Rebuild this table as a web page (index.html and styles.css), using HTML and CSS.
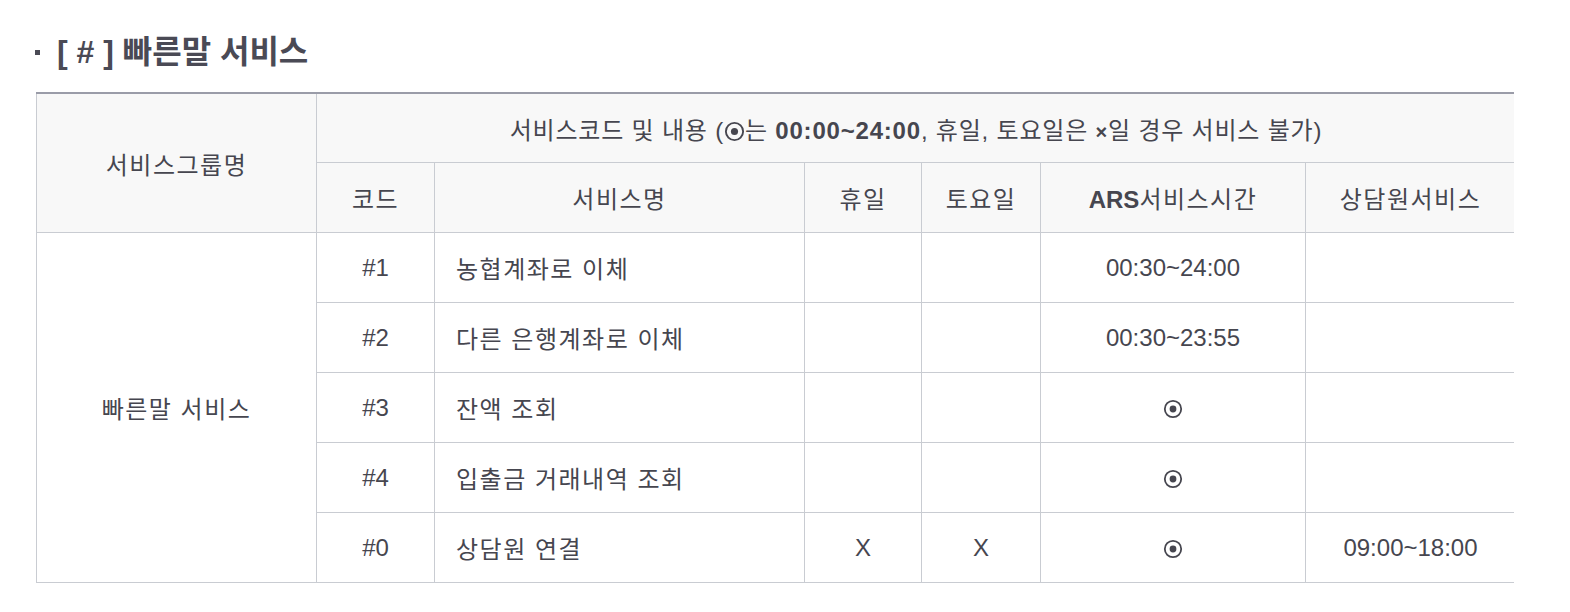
FILE: index.html
```html
<!DOCTYPE html>
<html lang="ko">
<head>
<meta charset="utf-8">
<link rel="stylesheet" href="styles.css">
</head>
<body>
<div class="page">
  <h2 class="title"><span class="bullet"></span>[ # ] 빠른말 서비스</h2>
  <div class="table-wrap">
    <table class="svc">
      <colgroup>
        <col class="c-group"><col class="c-code"><col class="c-name"><col class="c-hol"><col class="c-sat"><col class="c-ars"><col class="c-agent">
      </colgroup>
      <thead>
        <tr class="h1">
          <th rowspan="2" class="ko">서비스그룹명</th>
          <th colspan="6" class="mix">서비스코드 및 내용 (<svg class="dot inline" viewBox="0 0 20 20"><circle cx="10" cy="10" r="8.2" fill="none" stroke="currentColor" stroke-width="1.8"/><circle cx="10" cy="10" r="3.4" fill="currentColor"/></svg>는 <b>00:00~24:00</b>, 휴일, 토요일은 <b class="x">×</b>일 경우 서비스 불가)</th>
        </tr>
        <tr class="h2">
          <th class="ko">코드</th>
          <th class="ko">서비스명</th>
          <th class="ko">휴일</th>
          <th class="ko">토요일</th>
          <th class="ko"><b class="lat">ARS</b>서비스시간</th>
          <th class="ko">상담원서비스</th>
        </tr>
      </thead>
      <tbody>
        <tr>
          <td rowspan="5" class="ko">빠른말 서비스</td>
          <td>#1</td><td class="left ko">농협계좌로 이체</td><td></td><td></td><td>00:30~24:00</td><td></td>
        </tr>
        <tr>
          <td>#2</td><td class="left ko">다른 은행계좌로 이체</td><td></td><td></td><td>00:30~23:55</td><td></td>
        </tr>
        <tr>
          <td>#3</td><td class="left ko">잔액 조회</td><td></td><td></td><td><svg class="dot" viewBox="0 0 20 20"><circle cx="10" cy="10" r="8.2" fill="none" stroke="currentColor" stroke-width="1.8"/><circle cx="10" cy="10" r="3.4" fill="currentColor"/></svg></td><td></td>
        </tr>
        <tr>
          <td>#4</td><td class="left ko">입출금 거래내역 조회</td><td></td><td></td><td><svg class="dot" viewBox="0 0 20 20"><circle cx="10" cy="10" r="8.2" fill="none" stroke="currentColor" stroke-width="1.8"/><circle cx="10" cy="10" r="3.4" fill="currentColor"/></svg></td><td></td>
        </tr>
        <tr>
          <td>#0</td><td class="left ko">상담원 연결</td><td>X</td><td>X</td><td><svg class="dot" viewBox="0 0 20 20"><circle cx="10" cy="10" r="8.2" fill="none" stroke="currentColor" stroke-width="1.8"/><circle cx="10" cy="10" r="3.4" fill="currentColor"/></svg></td><td>09:00~18:00</td>
        </tr>
      </tbody>
    </table>
  </div>
</div>
</body>
</html>
```

FILE: styles.css
```css
html, body {
  margin: 0;
  padding: 0;
  background: #fff;
}
.page {
  padding: 32px 0 0 35px;
  font-family: "Liberation Sans", "Noto Sans CJK KR", sans-serif;
  color: #46464f;
}
.title {
  margin: 0 0 20px 0;
  font-size: 32px;
  line-height: 40px;
  font-weight: 700;
  color: #4a4a55;
  display: flex;
  align-items: center;
}
.bullet {
  width: 5px;
  height: 5px;
  background: #4a4a55;
  margin-right: 17px;
  margin-top: 0;
}
.table-wrap {
  margin-left: 1px;
  width: 1478px;
  overflow: hidden;
}
.svc {
  border-collapse: collapse;
  table-layout: fixed;
  width: 1479px;
  border-top: 2px solid #9a9ca8;
  font-size: 24px;
}
.c-group { width: 280px; }
.c-code { width: 118px; }
.c-name { width: 370px; }
.c-hol { width: 117px; }
.c-sat { width: 119px; }
.c-ars { width: 265px; }
.c-agent { width: 210px; }
.svc th, .svc td {
  border: 1px solid #c9ccd2;
  text-align: center;
  vertical-align: middle;
  padding: 0;
  font-weight: 400;
}
.svc th {
  background: #f8f8f8;
}
.svc .ko { letter-spacing: 1.5px; }
.svc .lat { letter-spacing: 0; }
.svc .mix { letter-spacing: 0.8px; }
.svc tr.h1 th { height: 68px; }
.svc tr.h2 th { height: 69px; }
.svc td { height: 69px; }
.svc td.left {
  text-align: left;
  padding-left: 21px;
}
.svc b { font-weight: 700; }
.svc .x { font-size: 20px; }
.dot {
  width: 20px;
  height: 20px;
  vertical-align: middle;
  color: #46464f;
}
.dot.inline {
  width: 21px;
  height: 21px;
  vertical-align: -3px;
}
```
